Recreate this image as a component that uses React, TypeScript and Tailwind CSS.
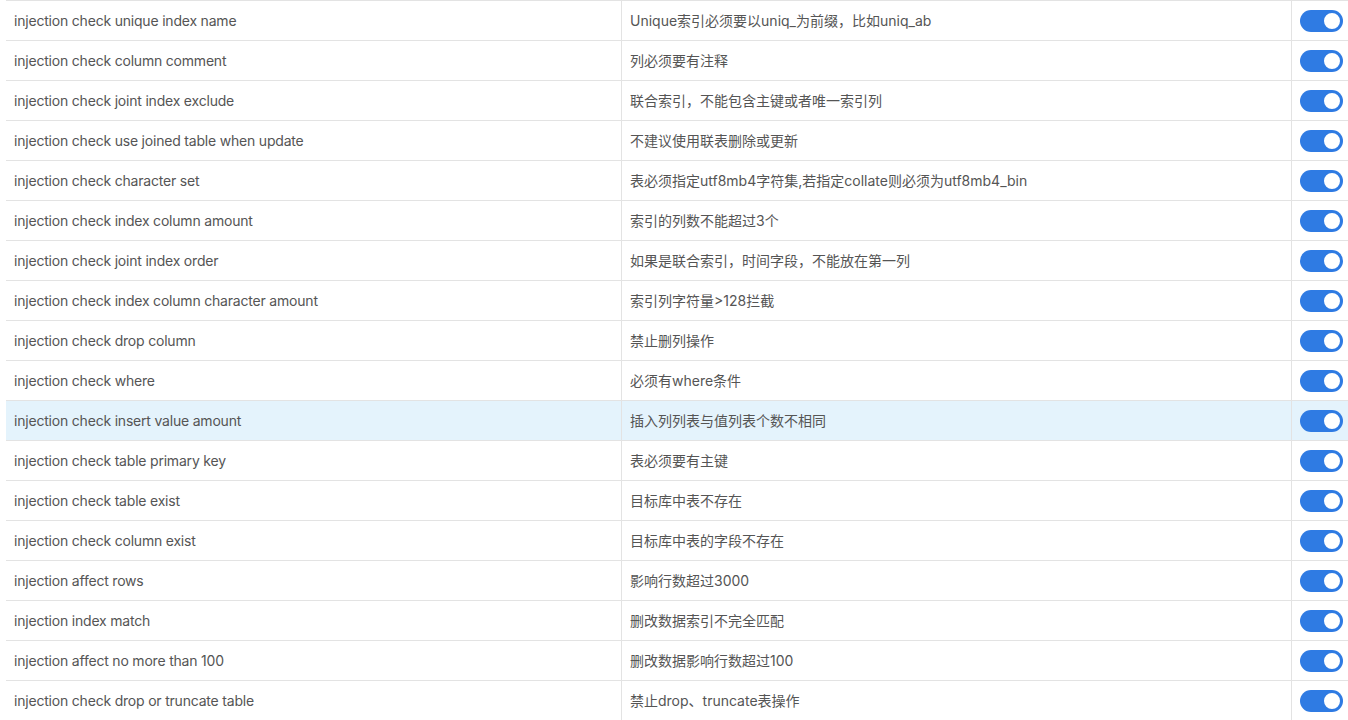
const rules: [string, string][] = [
  ['injection check unique index name', 'Unique索引必须要以uniq_为前缀，比如uniq_ab'],
  ['injection check column comment', '列必须要有注释'],
  ['injection check joint index exclude', '联合索引，不能包含主键或者唯一索引列'],
  ['injection check use joined table when update', '不建议使用联表删除或更新'],
  ['injection check character set', '表必须指定utf8mb4字符集,若指定collate则必须为utf8mb4_bin'],
  ['injection check index column amount', '索引的列数不能超过3个'],
  ['injection check joint index order', '如果是联合索引，时间字段，不能放在第一列'],
  ['injection check index column character amount', '索引列字符量>128拦截'],
  ['injection check drop column', '禁止删列操作'],
  ['injection check where', '必须有where条件'],
  ['injection check insert value amount', '插入列列表与值列表个数不相同'],
  ['injection check table primary key', '表必须要有主键'],
  ['injection check table exist', '目标库中表不存在'],
  ['injection check column exist', '目标库中表的字段不存在'],
  ['injection affect rows', '影响行数超过3000'],
  ['injection index match', '删改数据索引不完全匹配'],
  ['injection affect no more than 100', '删改数据影响行数超过100'],
  ['injection check drop or truncate table', '禁止drop、truncate表操作'],
]

function Toggle() {
  return (
    <span className="relative inline-flex h-[22px] w-[43px] items-center rounded-full bg-[#2f7be3]">
      <span className="absolute right-[1px] top-[1px] h-[20px] w-[20px] rounded-full border-2 border-[#2f7be3] bg-white" />
    </span>
  )
}

export default function App() {
  return (
    <div
      className="h-[720px] w-[1348px] overflow-hidden bg-white pl-[6px] text-[14px] text-[#555555]"
      style={{ fontFamily: 'Inter, "Noto Sans CJK SC", sans-serif' }}
    >
      <div className="w-[1400px] border-t border-[#e3e3e3]">
        {rules.map(([name, desc], i) => (
          <div
            key={name}
            className={`flex h-[40px] border-b border-[#e3e3e3] ${i === 10 ? 'bg-[#e4f3fc]' : ''}`}
          >
            <div className="flex w-[615px] items-center pl-[8px] tracking-[-0.2px]">{name}</div>
            <div className="flex w-[670px] items-center border-l border-[#e3e3e3] pl-[8px]">{desc}</div>
            <div className="flex flex-1 items-center border-l border-[#e3e3e3] pl-[8px]">
              <Toggle />
            </div>
          </div>
        ))}
      </div>
    </div>
  )
}
